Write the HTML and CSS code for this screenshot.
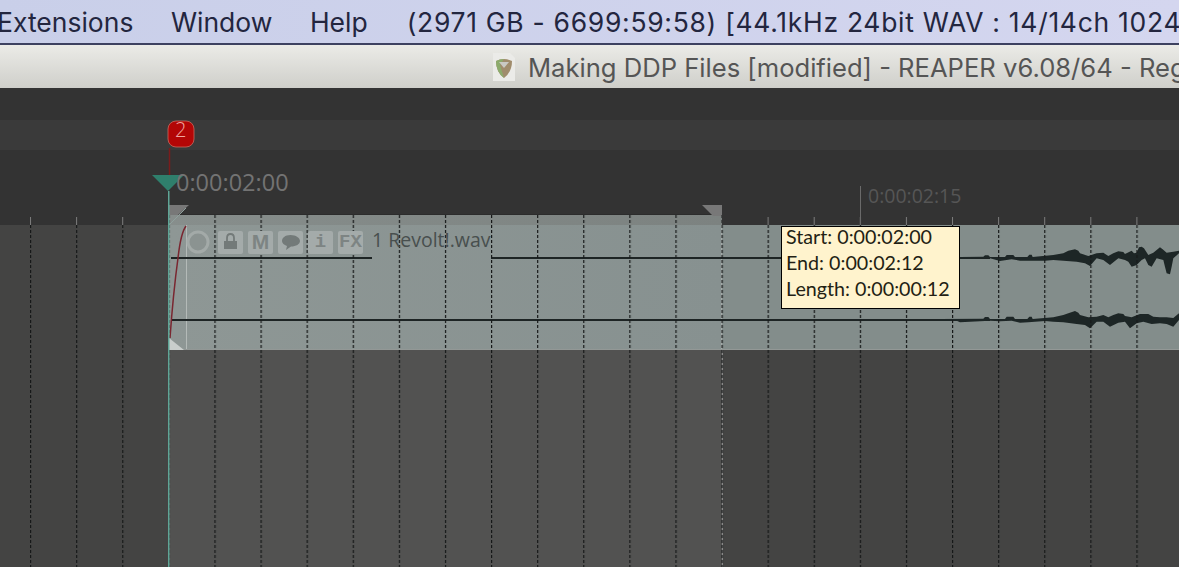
FILE: index.html
```html
<!DOCTYPE html>
<html lang="en">
  <head>
    <meta charset="UTF-8" />
    <title>REAPER - Making DDP Files</title>
    <link rel="stylesheet" href="styles.css">
  </head>
  <body>
    <div class="menubar">
      <span class="menu-extensions">Extensions</span>
      <span class="menu-window">Window</span>
      <span class="menu-help">Help</span>
      <span class="menu-status">(2971 GB - 6699:59:58) [44.1kHz 24bit WAV : 14/14ch 1024</span>
    </div>

    <div class="titlebar">
      <svg class="doc-icon" width="22" height="28" viewBox="0 0 22 28">
        <path d="M0 0H17L22 5V28H0Z" fill="#ebebe8" />
        <path d="M3 8Q11 4 19 8Q19 19 11 25Q3 19 3 8Z" fill="#a08c6c" />
        <path d="M3 8Q7 6 11 6L7 12L11 25Q3 19 3 8Z" fill="#8cab6c" />
        <path d="M6 9H16L11 15Z" fill="#c9c9c4" />
      </svg>
      <span class="title-text">Making DDP Files [modified] - REAPER v6.08/64 - Registered</span>
    </div>

    <div class="arrange">
      <div class="lane lane-top"></div>
      <div class="lane lane-markers"></div>
      <div class="lane lane-ruler"></div>
      <div class="lane lane-track"></div>

      <!-- everything below sits on the timeline canvas -->
      <div class="selection"></div>
      <div class="item">
        <div class="item-selected"></div>
        <div class="fade-line"></div>
      </div>
      <div class="item-top"></div>

      <svg class="canvas" width="1179" height="479" viewBox="0 88 1179 479">
        <defs>
          <pattern id="dash" x="30" y="225" width="46.1" height="5" patternUnits="userSpaceOnUse">
            <rect x="0" y="0" width="1.2" height="3" fill="#161818" />
          </pattern>
          <pattern id="tick" x="30" y="217" width="46.1" height="8" patternUnits="userSpaceOnUse">
            <rect x="0" y="0" width="1" height="8" fill="#7c7c7c" />
          </pattern>
        </defs>

        <!-- handles at the top of the time selection -->
        <rect x="178" y="214" width="535" height="1" fill="#2c2c2c" />
        <path d="M169 205H189L178 215H169Z" fill="#787878" />
        <path d="M702 205H722V216H713Z" fill="#787878" />
        <path d="M186 208L169 225" stroke="#8fa09c" stroke-width="1" />

        <rect x="0" y="217" width="168" height="8" fill="url(#tick)" />
        <rect x="723" y="217" width="456" height="8" fill="url(#tick)" />
        <rect x="860" y="186" width="1" height="39" fill="#6a6a6a" />

        <!-- waveform lines -->
        <path d="M171 258H372M491 258H990" stroke="#1d2424" stroke-width="2" />
        <path d="M171 320H990" stroke="#1d2424" stroke-width="2" />

        <g transform="translate(940 210) scale(.3333)" fill="#1d2626">
          <path d="M60 141L130 140L135 136L145 136L150 141L195 141L200 135L220 135L225 141L262 141L268 134L275 134L278 141L340 135L370 130L385 122L405 118L415 122L420 130L445 138L470 130L490 128L505 138L520 130L535 124L550 126L555 132L575 122L582 130L590 128L597 112L605 110L612 115L625 135L640 128L660 112L668 118L680 128L700 125L717 122L717 130L700 145L695 170L690 193L680 190L675 170L670 150L650 145L635 170L625 165L615 145L605 150L590 165L575 170L565 155L555 150L535 145L510 165L490 150L470 145L450 168L435 160L410 155L370 152L340 150L315 152L265 152L240 152L215 148L180 153L150 145L60 146Z" />
          <path d="M0 327L130 326L135 321L145 321L150 327L195 327L200 320L220 320L225 327L262 327L268 320L275 320L278 327L340 322L370 315L385 310L405 303L415 308L420 315L445 322L470 320L490 315L505 322L520 315L535 310L550 312L555 318L575 322L590 316L600 312L625 312L640 320L660 322L680 322L700 324L717 310L717 330L700 350L680 342L660 340L635 342L610 335L590 340L570 355L555 335L535 338L510 350L490 335L470 335L450 355L435 345L410 342L370 337L340 335L315 333L265 337L240 338L215 332L180 334L150 332L60 337L50 332L0 332Z" />
        </g>

        <rect x="169" y="215" width="553" height="10" fill="url(#dash)" />
        <rect x="0" y="225" width="1179" height="342" fill="url(#dash)" />

        <!-- take icons -->
        <circle cx="198" cy="242" r="10" fill="#8b9391" stroke="#a3aaa8" stroke-width="3" />
        <rect class="btn" x="218" y="231" width="25" height="23" rx="2" />
        <rect x="224" y="241" width="13" height="8" fill="#737a79" />
        <path d="M227 241V238Q227 234 230.500 234Q234 234 234 238V241" fill="none" stroke="#737a79" stroke-width="1.800" />
        <rect class="btn" x="248" y="231" width="25" height="23" rx="2" />
        <rect class="btn" x="278" y="231" width="25" height="23" rx="2" />
        <path d="M290.500 235C296 235 300 238 300 241C300 244 296 246.500 291 246.500L286 250L287 246C284 245 282 243 282 241C282 238 285 235 290.500 235Z" fill="#737a79" />
        <rect class="btn" x="308" y="231" width="25" height="23" rx="2" />
        <rect class="btn" x="338" y="231" width="25" height="23" rx="2" />

        <!-- fade in -->
        <path d="M169 338L184 350H169Z" fill="#c9cecc" />
        <path d="M170 338C172 310 175 280 178 258C180 240 183 230 186 226" fill="none" stroke="#7a2630" stroke-width="1.500" />

        <!-- playhead and marker -->
        <path d="M169.500 148V175" stroke="#7a1c1c" stroke-width="1.500" />
        <rect x="168" y="191" width="1.500" height="376" fill="#5fa596" />
        <path d="M152 175H184L168 191Z" fill="#2f7f6c" />
        <rect x="168" y="121" width="26" height="26" rx="8" fill="#b30606" stroke="#c96a5e" stroke-width="0.800" />
      </svg>

      <span class="marker-num">2</span>
      <span class="time-main">0:00:02:00</span>
      <span class="time-tick">0:00:02:15</span>
      <span class="btn-label btn-m">M</span>
      <span class="btn-label btn-i">i</span>
      <span class="btn-label btn-fx">FX</span>
      <span class="item-name">1 Revolt!.wav</span>

      <div class="tooltip">
        <div>Start: 0:00:02:00</div>
        <div>End: 0:00:02:12</div>
        <div>Length: 0:00:00:12</div>
      </div>
    </div>
  </body>
</html>
```

FILE: styles.css
```css
html,
body {
  margin: 0;
  height: 567px;
  overflow: hidden;
  background-color: #333;
}

.menubar {
  display: flex;
  align-items: center;
  height: 43px;
  border-bottom: 2px solid #3d4160;
  background: linear-gradient(to right, #c9cfe9, #d4d6ef);
  color: #23263f;
  font-family: Inter, sans-serif;
  font-size: 26.500px;
  white-space: nowrap;
  overflow: hidden;
}

.menu-extensions {
  margin-left: -3px;
}

.menu-window {
  margin-left: 37.500px;
}

.menu-help {
  margin-left: 37.500px;
}

.menu-status {
  margin-left: 39px;
  letter-spacing: 0.700px;
}

.titlebar {
  display: flex;
  align-items: center;
  height: 43px;
  padding-left: 493px;
  background: linear-gradient(to bottom, #ebebe7, #cfcfca);
  color: #555;
  font-family: Inter, sans-serif;
  font-size: 25.600px;
  white-space: nowrap;
  overflow: hidden;
}

.doc-icon {
  flex: none;
  margin-right: 13px;
}

.title-text {
  padding-top: 1px;
}

.arrange {
  position: relative;
  height: 479px;
  overflow: hidden;
}

.lane-top {
  height: 32px;
  background-color: #333;
}

.lane-markers {
  height: 30px;
  background-color: #3a3a3a;
}

.lane-ruler {
  height: 75px;
  background-color: #333;
}

.lane-track {
  height: 342px;
  background-color: #444443;
}

.canvas {
  position: absolute;
  top: 0;
  left: 0;
}

.selection {
  position: absolute;
  left: 168px;
  top: 262px;
  width: 554px;
  height: 217px;
  background-color: #525251;
  border-right: 1px solid #8a8a8a;
}

.item {
  position: absolute;
  left: 168px;
  right: 0;
  top: 137px;
  height: 125px;
  border-bottom: 1px solid #939896;
  box-sizing: border-box;
  background-color: #838d8b;
}

.item-selected {
  height: 100%;
  width: 554px;
  background: linear-gradient(to right, #8e9795, #879190);
  border-right: 1px solid #a4aaa8;
  box-sizing: border-box;
}

.item-top {
  position: absolute;
  left: 168px;
  top: 127px;
  width: 554px;
  height: 10px;
  background: linear-gradient(to right, #878e8c, #7c8280);
  box-sizing: border-box;
}

.fade-line {
  position: absolute;
  left: 18px;
  top: 0;
  bottom: 0;
  width: 1px;
  background-color: #b4bab8;
}

.btn {
  fill: #a4abaa;
}

.marker-num {
  position: absolute;
  left: 175px;
  top: 31px;
  color: #f0a8a0;
  font-family: "Open Sans", sans-serif;
  font-size: 20px;
  font-weight: 300;
  line-height: 22px;
}

.time-main,
.time-tick {
  position: absolute;
  font-family: "Open Sans", sans-serif;
  white-space: nowrap;
}

.time-main {
  left: 176px;
  top: 79px;
  color: #737373;
  font-size: 23.500px;
  line-height: 30px;
}

.time-tick {
  left: 868px;
  top: 96px;
  color: #565656;
  font-size: 19.500px;
  line-height: 24px;
}

.btn-label {
  position: absolute;
  top: 142px;
  color: #7d8483;
  font-family: "Liberation Mono", monospace;
  font-size: 19px;
  font-weight: bold;
  line-height: 24px;
  text-align: center;
  width: 25px;
}

.btn-m {
  left: 248px;
  font-family: "Liberation Sans", sans-serif;
  font-size: 21px;
}

.btn-i {
  left: 308px;
}

.btn-fx {
  left: 338px;
}

.item-name {
  position: absolute;
  left: 372px;
  top: 140px;
  color: #484f4e;
  font-family: "Open Sans", sans-serif;
  font-size: 19.500px;
  line-height: 24px;
  white-space: nowrap;
}

.tooltip {
  position: absolute;
  left: 781px;
  top: 138px;
  width: 179px;
  height: 83px;
  box-sizing: border-box;
  padding: 0 4px;
  border: 1px solid #000;
  background-color: #fff3cd;
  color: #231f14;
  font-family: Lato, sans-serif;
  font-size: 19.700px;
  line-height: 26px;
  white-space: nowrap;
}

.tooltip div:first-child {
  margin-top: -3px;
}
```
